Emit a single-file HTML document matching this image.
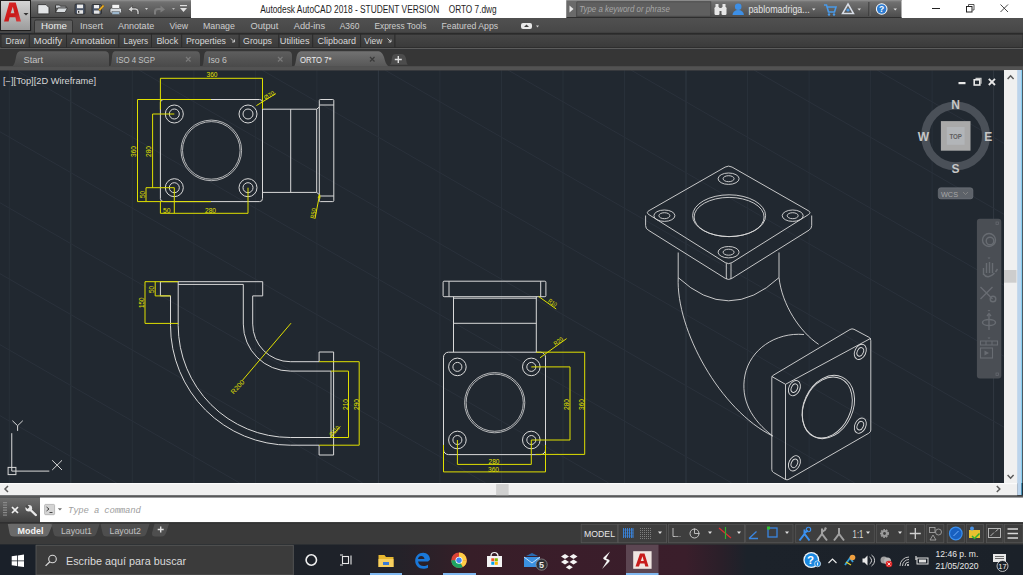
<!DOCTYPE html>
<html><head><meta charset="utf-8">
<style>
html,body{margin:0;padding:0;overflow:hidden;background:#212830;width:1023px;height:575px}
svg{display:block}
text{font-family:"Liberation Sans",sans-serif}
</style></head><body>
<svg width="1023" height="575" viewBox="0 0 1023 575">
<defs>
<linearGradient id="gQat" x1="0" y1="0" x2="0" y2="1"><stop offset="0" stop-color="#858585"/><stop offset="0.15" stop-color="#6e6e6e"/><stop offset="0.6" stop-color="#5c5c5c"/><stop offset="1" stop-color="#4a4a4a"/></linearGradient>
<linearGradient id="gTabRow" x1="0" y1="0" x2="0" y2="1"><stop offset="0" stop-color="#505050"/><stop offset="1" stop-color="#474747"/></linearGradient>
<linearGradient id="gApp" x1="0" y1="0" x2="0" y2="1"><stop offset="0" stop-color="#d4d4d4"/><stop offset="1" stop-color="#9c9c9c"/></linearGradient>
<linearGradient id="gTab" x1="0" y1="0" x2="0" y2="1"><stop offset="0" stop-color="#5e5e5e"/><stop offset="1" stop-color="#4a4a4a"/></linearGradient>
<linearGradient id="gPanel" x1="0" y1="0" x2="0" y2="1"><stop offset="0" stop-color="#474747"/><stop offset="1" stop-color="#3a3a3a"/></linearGradient>
<linearGradient id="gCmdL" x1="0" y1="0" x2="0" y2="1"><stop offset="0" stop-color="#6e6e6e"/><stop offset="1" stop-color="#3e3e3e"/></linearGradient>
<linearGradient id="gA" x1="0" y1="0" x2="1" y2="1"><stop offset="0" stop-color="#e02828"/><stop offset="0.6" stop-color="#c81818"/><stop offset="1" stop-color="#d84040"/></linearGradient>
<linearGradient id="gTask" gradientUnits="userSpaceOnUse" x1="0" y1="0" x2="1023" y2="0"><stop offset="0" stop-color="#1c2229"/><stop offset="0.33" stop-color="#1e2229"/><stop offset="0.39" stop-color="#242229"/><stop offset="0.43" stop-color="#2e2028"/><stop offset="0.46" stop-color="#371e28"/><stop offset="0.55" stop-color="#3a1d2a"/><stop offset="0.67" stop-color="#3a1e2b"/><stop offset="0.705" stop-color="#2a1f29"/><stop offset="0.73" stop-color="#1c222a"/><stop offset="1" stop-color="#1b2129"/></linearGradient>
<linearGradient id="gTabAct" x1="0" y1="0" x2="0" y2="1"><stop offset="0" stop-color="#727272"/><stop offset="1" stop-color="#575757"/></linearGradient>
</defs>
<!-- ===== DRAWING AREA ===== -->
<rect x="0" y="70" width="1004" height="413" fill="#212830"/>
<g>
<line x1="9.3" y1="70" x2="9.3" y2="483" stroke="#283039" stroke-width="1"/>
<line x1="70.8" y1="70" x2="70.8" y2="483" stroke="#313942" stroke-width="1"/>
<line x1="132.3" y1="70" x2="132.3" y2="483" stroke="#283039" stroke-width="1"/>
<line x1="193.9" y1="70" x2="193.9" y2="483" stroke="#283039" stroke-width="1"/>
<line x1="255.4" y1="70" x2="255.4" y2="483" stroke="#283039" stroke-width="1"/>
<line x1="316.9" y1="70" x2="316.9" y2="483" stroke="#283039" stroke-width="1"/>
<line x1="378.4" y1="70" x2="378.4" y2="483" stroke="#313942" stroke-width="1"/>
<line x1="439.9" y1="70" x2="439.9" y2="483" stroke="#283039" stroke-width="1"/>
<line x1="501.5" y1="70" x2="501.5" y2="483" stroke="#283039" stroke-width="1"/>
<line x1="563.0" y1="70" x2="563.0" y2="483" stroke="#283039" stroke-width="1"/>
<line x1="624.5" y1="70" x2="624.5" y2="483" stroke="#283039" stroke-width="1"/>
<line x1="686.0" y1="70" x2="686.0" y2="483" stroke="#313942" stroke-width="1"/>
<line x1="747.5" y1="70" x2="747.5" y2="483" stroke="#283039" stroke-width="1"/>
<line x1="809.1" y1="70" x2="809.1" y2="483" stroke="#283039" stroke-width="1"/>
<line x1="870.6" y1="70" x2="870.6" y2="483" stroke="#283039" stroke-width="1"/>
<line x1="932.1" y1="70" x2="932.1" y2="483" stroke="#283039" stroke-width="1"/>
<line x1="993.6" y1="70" x2="993.6" y2="483" stroke="#313942" stroke-width="1"/>
<line x1="-1214.1" y1="70" x2="-498.3" y2="483" stroke="#2a313b" stroke-width="1"/>
<line x1="-1091.1" y1="70" x2="-375.3" y2="483" stroke="#2a313b" stroke-width="1"/>
<line x1="-968.1" y1="70" x2="-252.3" y2="483" stroke="#2a313b" stroke-width="1"/>
<line x1="-845.1" y1="70" x2="-129.3" y2="483" stroke="#2a313b" stroke-width="1"/>
<line x1="-722.1" y1="70" x2="-6.3" y2="483" stroke="#2a313b" stroke-width="1"/>
<line x1="-599.1" y1="70" x2="116.7" y2="483" stroke="#2a313b" stroke-width="1"/>
<line x1="-476.1" y1="70" x2="239.7" y2="483" stroke="#2a313b" stroke-width="1"/>
<line x1="-353.1" y1="70" x2="362.7" y2="483" stroke="#2a313b" stroke-width="1"/>
<line x1="-230.1" y1="70" x2="485.7" y2="483" stroke="#2a313b" stroke-width="1"/>
<line x1="-107.1" y1="70" x2="608.7" y2="483" stroke="#2a313b" stroke-width="1"/>
<line x1="15.9" y1="70" x2="731.7" y2="483" stroke="#2a313b" stroke-width="1"/>
<line x1="138.9" y1="70" x2="854.7" y2="483" stroke="#2a313b" stroke-width="1"/>
<line x1="261.9" y1="70" x2="977.7" y2="483" stroke="#2a313b" stroke-width="1"/>
<line x1="384.9" y1="70" x2="1100.7" y2="483" stroke="#2a313b" stroke-width="1"/>
<line x1="507.9" y1="70" x2="1223.7" y2="483" stroke="#2a313b" stroke-width="1"/>
<line x1="630.9" y1="70" x2="1346.7" y2="483" stroke="#2a313b" stroke-width="1"/>
<line x1="753.9" y1="70" x2="1469.7" y2="483" stroke="#2a313b" stroke-width="1"/>
<line x1="876.9" y1="70" x2="1592.7" y2="483" stroke="#2a313b" stroke-width="1"/>
</g>
<text x="3" y="83.5" font-size="8.5" fill="#d8d8d8" textLength="93" lengthAdjust="spacingAndGlyphs">[−][Top][2D Wireframe]</text>
<!-- UCS icon -->
<g stroke="#d8d8d8" stroke-width="1" fill="none">
<path d="M11.75 433.2 V471.1 H49.3"/>
<rect x="8.1" y="467.4" width="7.8" height="7.2"/>
<path d="M12.4 420.7 L17.6 425.7 L22.8 420.7 M17.6 425.7 V430.9"/>
<path d="M52.2 460.3 L62 470 M62 460.3 L52.2 470"/>
</g>

<!-- ===== VIEW 1: top view ===== -->
<g stroke="#d9d9d9" stroke-width="1" fill="none">
<rect x="160.4" y="99.5" width="102.1" height="102.1" rx="3"/>
<circle cx="211.3" cy="150.4" r="30.3" stroke-width="0.8"/><circle cx="211.3" cy="150.4" r="28.8" stroke-width="0.8"/>
<circle cx="174.3" cy="114" r="9"/><circle cx="174.3" cy="114" r="5"/>
<circle cx="248" cy="114" r="9"/><circle cx="248" cy="114" r="5"/>
<circle cx="174.3" cy="187.7" r="9"/><circle cx="174.3" cy="187.7" r="5"/>
<circle cx="248" cy="187.7" r="9"/><circle cx="248" cy="187.7" r="5"/>
<path d="M262.5 109.2 H316.7 V192.4 H262.5"/>
<path d="M290.7 109.2 V192.4"/>
<path d="M316.7 109.2 L319.3 107 M316.7 192.4 L319.3 194.6"/>
<rect x="319.3" y="99.5" width="14.5" height="102.1" rx="1"/>
<path d="M319.3 105 H333.8 M319.3 196 H333.8"/>
</g>
<g stroke="#e0e000" stroke-width="1" fill="none">
<path d="M160.4 78.3 H262.5 M160.4 78.3 V109.5 M262.5 78.3 V109"/>
<path d="M137.5 99.5 V201.6 M137.5 99.5 H211 M137.5 201.6 H211"/>
<path d="M152.6 114 V187.7 M152.6 114 H174.3 M146 187.7 H174.3"/>
<path d="M146 187.7 V201.6"/>
<path d="M160.4 213.3 H248 M160.4 201.6 V213.3 M174.3 187.7 V213.3 M248 187.7 V213.3"/>
<path d="M256.4 105.6 L275.9 93.6"/>
<path d="M319.6 194.6 L315 218.6 M319.6 194.6 l-1.5 3.5 M319.6 194.6 l0.4 3.8"/>
</g>
<g fill="#e0e000" font-size="6.3">
<text x="206.5" y="77.3" textLength="11" lengthAdjust="spacingAndGlyphs">360</text>
<text x="0" y="0" transform="translate(136 157) rotate(-90)" textLength="11" lengthAdjust="spacingAndGlyphs">360</text>
<text x="0" y="0" transform="translate(151.3 157) rotate(-90)" textLength="11" lengthAdjust="spacingAndGlyphs">280</text>
<text x="0" y="0" transform="translate(145 198) rotate(-90)" textLength="7" lengthAdjust="spacingAndGlyphs">50</text>
<text x="163" y="213" textLength="7.5" lengthAdjust="spacingAndGlyphs">50</text>
<text x="205" y="213" textLength="11" lengthAdjust="spacingAndGlyphs">280</text>
<text x="0" y="0" transform="translate(265.5 100) rotate(-31)" textLength="11" lengthAdjust="spacingAndGlyphs">Ø70</text>
<text x="0" y="0" transform="translate(314.8 219) rotate(-80)" font-size="6.5" textLength="10.5" lengthAdjust="spacingAndGlyphs">R50</text>
</g>

<!-- ===== VIEW 2: front view elbow ===== -->
<g stroke="#d9d9d9" stroke-width="1" fill="none">
<path d="M170.5 295.9 H160.4 V281.7 H262.7 V295.9 H252.7 V324.1"/>
<path d="M178.2 284.4 H243.3 V324.1"/>
<path d="M170.5 295.9 V325.4 A119.8 119.8 0 0 0 290.3 445.2 H319.1"/>
<path d="M178.2 281.7 V325.4 A112.1 112.1 0 0 0 290.3 437.5 H331"/>
<path d="M252.7 324.1 A37.6 37.6 0 0 0 290.3 361.7 H319.1"/>
<path d="M243.3 324.1 A47 47 0 0 0 290.3 371.1 H331"/>
<path d="M319.1 361.7 V352 H333.6 V455 H319.1 V445.2"/>
<path d="M331 371.1 V437.5"/>
</g>
<g stroke="#e0e000" stroke-width="1" fill="none">
<path d="M145 281.7 H178.2 M145 281.7 V323.4 H178.2"/>
<path d="M155.2 281.7 V295.9 H170.5"/>
<path d="M242.3 380.5 L291 323.2"/>
<path d="M319.1 361.7 H359.2 V445.2 H319.1"/>
<path d="M331 371.1 H348.5 V437.5 H331"/>
<path d="M330.3 437.4 L340.3 426.4"/>
</g>
<g fill="#e0e000" font-size="6.3">
<text x="0" y="0" transform="translate(154 293) rotate(-90)" textLength="7" lengthAdjust="spacingAndGlyphs">50</text>
<text x="0" y="0" transform="translate(144 308) rotate(-90)" textLength="10.5" lengthAdjust="spacingAndGlyphs">150</text>
<text x="0" y="0" transform="translate(233.5 394.5) rotate(-47)" font-size="6.5" textLength="16.5" lengthAdjust="spacingAndGlyphs">R200</text>
<text x="0" y="0" transform="translate(347.5 410) rotate(-90)" textLength="11" lengthAdjust="spacingAndGlyphs">210</text>
<text x="0" y="0" transform="translate(358.5 410) rotate(-90)" textLength="11" lengthAdjust="spacingAndGlyphs">290</text>
<text x="0" y="0" transform="translate(332 437) rotate(-48)" textLength="12" lengthAdjust="spacingAndGlyphs">Ø110</text>
</g>

<!-- ===== VIEW 3: side view ===== -->
<g stroke="#d9d9d9" stroke-width="1" fill="none">
<rect x="443.1" y="281.2" width="102.8" height="15.5" rx="1"/>
<path d="M449 281.2 V296.7 M540.7 281.2 V296.7"/>
<path d="M453.5 296.7 V352.2 M536.3 296.7 V352.2 M453.5 298.2 H536.3 M453.5 323.3 H536.3"/>
<rect x="443.5" y="352.2" width="102" height="102.4" rx="5"/>
<circle cx="494.7" cy="402.7" r="30.1" stroke-width="0.8"/><circle cx="494.7" cy="402.7" r="28.6" stroke-width="0.8"/>
<circle cx="457.4" cy="366.9" r="8.8"/><circle cx="457.4" cy="366.9" r="4.5"/>
<circle cx="531.3" cy="366.9" r="8.8"/><circle cx="531.3" cy="366.9" r="4.5"/>
<circle cx="457.4" cy="440" r="8.8"/><circle cx="457.4" cy="440" r="4.5"/>
<circle cx="531.3" cy="440" r="8.8"/><circle cx="531.3" cy="440" r="4.5"/>
</g>
<g stroke="#e0e000" stroke-width="1" fill="none">
<path d="M531.3 366.9 H570 V440 H531.3"/>
<path d="M536.3 352.2 H584.7 V454.4 H535.5"/>
<path d="M457.4 440 V464.4 H531.3 V440"/>
<path d="M443.5 444.9 V471.9 H545.5 V444.9"/>
<path d="M538.5 296.4 L556.2 309"/>
<path d="M540 357.8 L566.6 338.6"/>
</g>
<g fill="#e0e000" font-size="6.3">
<text x="0" y="0" transform="translate(569 410) rotate(-90)" textLength="11" lengthAdjust="spacingAndGlyphs">280</text>
<text x="0" y="0" transform="translate(583.5 410) rotate(-90)" textLength="11" lengthAdjust="spacingAndGlyphs">360</text>
<text x="488.5" y="464" textLength="11" lengthAdjust="spacingAndGlyphs">280</text>
<text x="488" y="471.5" textLength="11" lengthAdjust="spacingAndGlyphs">360</text>
<text x="0" y="0" transform="translate(547.5 302) rotate(35)" textLength="9" lengthAdjust="spacingAndGlyphs">R10</text>
<text x="0" y="0" transform="translate(555.5 346) rotate(-35)" textLength="10" lengthAdjust="spacingAndGlyphs">R20</text>
</g>

<!-- ===== VIEW 4: isometric ===== -->
<g stroke="#d9d9d9" stroke-width="0.9" fill="none">
<path d="M732.1 167.1 L808.2 210.6 Q811.7 212.6 808.3 214.7 L732.0 262.6 Q728.6 264.7 725.2 262.6 L649.0 214.7 Q645.6 212.6 649.1 210.6 L725.1 167.1 Q728.6 165.1 732.1 167.1Z"/>
<path d="M645.6 215.5 V225.5 Q645.6 228.5 648.2 230.1 L725.5 278.5 Q728.6 280.4 731.7 278.5 L809.1 230.1 Q811.7 228.5 811.7 225.5 V215.5"/>
<path d="M726.3 263.3 V279 M731 263.3 V279"/>
<ellipse cx="729.1" cy="215.7" rx="36.5" ry="20.9"/>
<ellipse cx="729.1" cy="217" rx="35" ry="19.6"/>
<ellipse cx="728.6" cy="178.7" rx="10.5" ry="5.7"/><ellipse cx="728.6" cy="178.7" rx="5.5" ry="3"/>
<ellipse cx="664.4" cy="215.7" rx="10.5" ry="5.7"/><ellipse cx="664.4" cy="215.7" rx="5.5" ry="3"/>
<ellipse cx="792.7" cy="215.7" rx="10.5" ry="5.7"/><ellipse cx="792.7" cy="215.7" rx="5.5" ry="3"/>
<ellipse cx="728.6" cy="252.2" rx="10.5" ry="5.7"/><ellipse cx="728.6" cy="252.2" rx="5.5" ry="3"/>
<path d="M678.2 252.5 V277.6"/>
<path d="M779 252.5 V277.6"/>
<path d="M678.2 277.6 Q728.6 324 779 277.6"/>
<path d="M678.2 277.6 C676 330 720 410 772.7 436"/>
<path d="M779 277.6 C782 305 800 332 818.6 344.3"/>
<path d="M772.7 436 C752 420 740 400 745 375 C750 350 775 332 804 334.5"/>
<!-- side flange -->
<path d="M774 374.8 L850 329.5 Q852 328.3 854 329.3 L868.8 337.2 Q870.8 338.3 870.8 340.5 V430 Q870.8 432 868.8 433.2 L789 479.2 Q787 480.3 785.5 479.5 L773.5 472.5 Q771.8 471.5 771.8 469.5 V377.5 Q771.8 375.8 774 374.8Z"/>
<path d="M785.5 384.3 L870.8 338.3 M785.5 384.3 V479.5 M771.8 376.5 L785.5 384.3"/>
<ellipse cx="828.3" cy="407" rx="24.5" ry="33" transform="rotate(25 828.3 407)"/>
<ellipse cx="827.3" cy="407.5" rx="23.2" ry="31.8" transform="rotate(25 827.3 407.5)"/>
<ellipse cx="794.4" cy="388.2" rx="5.5" ry="8" transform="rotate(25 794.4 388.2)"/><ellipse cx="794.4" cy="388.2" rx="3" ry="4.5" transform="rotate(25 794.4 388.2)"/>
<ellipse cx="860.3" cy="351.9" rx="5.5" ry="8" transform="rotate(25 860.3 351.9)"/><ellipse cx="860.3" cy="351.9" rx="3" ry="4.5" transform="rotate(25 860.3 351.9)"/>
<ellipse cx="860.3" cy="425.7" rx="5.5" ry="8" transform="rotate(25 860.3 425.7)"/><ellipse cx="860.3" cy="425.7" rx="3" ry="4.5" transform="rotate(25 860.3 425.7)"/>
<ellipse cx="794.4" cy="463.3" rx="5.5" ry="8" transform="rotate(25 794.4 463.3)"/><ellipse cx="794.4" cy="463.3" rx="3" ry="4.5" transform="rotate(25 794.4 463.3)"/>
</g>

<!-- viewport controls -->
<rect x="958.5" y="82" width="7" height="2.2" fill="#e8e8e8"/>
<rect x="974.2" y="79.8" width="5.6" height="5.2" fill="none" stroke="#e8e8e8" stroke-width="1.6"/><path d="M975.5 78.3 h5.5 v5.5" fill="none" stroke="#c8c8c8" stroke-width="1.2"/>
<path d="M988.8 78.8 l6.2 6.2 M995 78.8 l-6.2 6.2" stroke="#e8e8e8" stroke-width="1.8"/>
<!-- ViewCube -->
<circle cx="955.6" cy="135.9" r="30.4" fill="none" stroke="#4a5058" stroke-width="8"/>
<rect x="940.9" y="121.1" width="29.6" height="29.6" fill="#a9a9a9"/>
<rect x="946.8" y="127" width="17.8" height="17.8" fill="#b2b5b8"/>
<text x="955.7" y="139.3" font-size="8" font-weight="bold" fill="#5e5e5e" text-anchor="middle" textLength="12.6" lengthAdjust="spacingAndGlyphs">TOP</text>
<g font-size="12" font-weight="bold" fill="#c6c6c6" text-anchor="middle">
<text x="955.5" y="109">N</text>
<text x="955.5" y="173.4">S</text>
<text x="923.3" y="140.9">W</text>
<text x="988.2" y="140.9">E</text>
</g>
<rect x="938.3" y="187.8" width="34.6" height="11.1" rx="2.5" fill="#5d6269" stroke="#70757c" stroke-width="0.6"/>
<text x="941" y="196.5" font-size="8" fill="#a8a8a8" textLength="17" lengthAdjust="spacingAndGlyphs">WCS</text>
<path d="M963 192 l2.5 2.5 l2.5-2.5" stroke="#8a8a8a" stroke-width="0.8" fill="none"/>
<!-- nav bar -->
<rect x="976.9" y="218.8" width="24.4" height="159.8" rx="3" fill="#4a4e54"/>
<rect x="996" y="222" width="2.5" height="2.5" fill="none" stroke="#686c72" stroke-width="0.7"/>
<rect x="996" y="373" width="2.5" height="2.5" fill="none" stroke="#686c72" stroke-width="0.7"/>
<g stroke="#686c72" stroke-width="1.4" fill="none">
<circle cx="989" cy="240" r="6.5"/><circle cx="990" cy="241" r="3.8"/>
<path d="M983.5 275 v-7 M986.5 273 v-10 M989.5 273 v-11 M992.5 273 v-10 M995.5 272 l2-3 M983.5 274 q4 6 11 -1"/>
<path d="M980.5 287 l12 12 M992.5 287 l-12 12"/><circle cx="993" cy="299" r="2.8"/>
<path d="M989 314 v16"/><ellipse cx="989" cy="322.5" rx="6.5" ry="3"/><path d="M987 316 l2-2.5 l2 2.5"/>
<path d="M980.5 341 h17 v4 h-17z M986 341 v4 M992 341 v4" stroke-width="1.1"/><rect x="980.5" y="348" width="12" height="10" stroke-width="1.1"/><path d="M984.5 350.5 l4.5 2.5 l-4.5 2.5z" fill="#686c72" stroke="none"/>
</g>
<path d="M987.5 257.5 h3 l-1.5 1.5z M987.5 310 h3 l-1.5 1.5z M987.5 337.5 h3 l-1.5 1.5z" fill="#686c72"/>
<!-- ===== TITLE / QAT ROW ===== -->
<rect x="0" y="0" width="1023" height="18" fill="#ffffff"/>
<rect x="0" y="0" width="191" height="18" fill="url(#gQat)"/>
<rect x="0" y="0" width="191" height="1" fill="#8a8a8a"/>
<rect x="0" y="17" width="191" height="1" fill="#2e2e2e"/>
<!-- QAT icons -->
<g>
 <path d="M37.8 4.6 h8.2 l3 3 v6.3 h-11.2z" fill="#e2e4e6" stroke="#333" stroke-width="0.9"/>
 <path d="M55.5 5 h4 l1 1.2 h5.5 v2 h-10.5z" fill="#c8ccd0" stroke="#333" stroke-width="0.8"/><path d="M55.5 12.5 l2.5-4.5 h9.5 l-2.5 4.5z" fill="#d8dcdf" stroke="#333" stroke-width="0.8"/><path d="M55.5 6 v6.5" stroke="#333" stroke-width="0.8"/>
 <rect x="75" y="4" width="10" height="10" rx="1" fill="#4c5668" stroke="#2a2a2a" stroke-width="0.8"/><rect x="77" y="4.6" width="6" height="3.6" fill="#ececec"/><rect x="77" y="10.2" width="6" height="3.5" fill="#e4e4e4"/><rect x="78" y="11" width="1.3" height="1.8" fill="#333"/>
 <rect x="92" y="4.5" width="9.5" height="9.5" rx="1" fill="#4c5668" stroke="#2a2a2a" stroke-width="0.8"/><rect x="94" y="10.5" width="5.5" height="3.2" fill="#e4e4e4"/><rect x="94" y="5" width="5" height="3.3" fill="#ececec"/><path d="M98.5 9.5 l4.5-4.8 l1.4 1.4 l-4.5 4.8z" fill="#f0b020" stroke="#6a4a10" stroke-width="0.4"/>
 <rect x="110" y="8" width="11.5" height="5.2" rx="1.5" fill="#d4d8dc" stroke="#333" stroke-width="0.7"/><rect x="112" y="4.5" width="7.5" height="3.8" fill="#f4f4f4" stroke="#555" stroke-width="0.5"/><rect x="112" y="11.5" width="7.5" height="3" fill="#9cb6cc" stroke="#555" stroke-width="0.5"/>
 <path d="M128 9.5 l4.5-4 v2.5 h3 a3.5 3.5 0 0 1 3.5 3.5 v3 h-2 v-2.5 a2 2 0 0 0 -2-2 h-2.5 v2.5z" fill="#d4d4d4" stroke="#333" stroke-width="0.6"/>
 <path d="M145 8 h3 l-1.5 2z" fill="#d0d0d0"/>
 <path d="M165 9.5 l-4.5-4 v2.5 h-3 a3.5 3.5 0 0 0 -3.5 3.5 v3 h2 v-2.5 a2 2 0 0 1 2-2 h2.5 v2.5z" fill="#7e7e7e"/>
 <path d="M172 8 h3 l-1.5 2z" fill="#b0b0b0"/>
 <rect x="180" y="5" width="7" height="1.2" fill="#e0e0e0"/><path d="M180 8 h7 l-3.5 4z" fill="#e0e0e0"/>
</g>
<!-- App button -->
<rect x="0" y="0" width="31" height="31" fill="#1e1e1e"/>
<rect x="1" y="1" width="29" height="29" fill="url(#gApp)"/>
<path d="M4 21.6 L9.3 2.4 H15.7 L21 21.6 H16.4 L15.4 17.3 H9.6 L8.6 21.6Z M10.6 13.2 H14.4 L12.8 6.8Z" fill="url(#gA)" fill-rule="evenodd"/>
<path d="M23.5 13 h5 l-2.5 2.6z" fill="#333"/>
<!-- Title text -->
<text x="260.2" y="12.6" font-size="10" fill="#1e1e1e" textLength="179" lengthAdjust="spacingAndGlyphs">Autodesk AutoCAD 2018 - STUDENT VERSION</text>
<text x="448.7" y="12.6" font-size="10" fill="#1e1e1e" textLength="48" lengthAdjust="spacingAndGlyphs">ORTO 7.dwg</text>
<!-- Search/InfoCenter bar -->
<rect x="566.5" y="0" width="335" height="18" fill="url(#gQat)"/>
<rect x="566.5" y="0" width="335" height="1" fill="#8a8a8a"/>
<rect x="566.5" y="17" width="335" height="1" fill="#2e2e2e"/>
<rect x="566.5" y="1" width="9.5" height="16" fill="#6a6a6a"/>
<path d="M569.5 5.5 l4 3.5 l-4 3.5z" fill="#e8e8e8"/>
<rect x="576.8" y="1.8" width="134" height="14.4" fill="#5f5f5f" stroke="#474747" stroke-width="0.8"/>
<text x="579.3" y="12.4" font-size="9.5" font-style="italic" fill="#a6a6a6" textLength="90.5" lengthAdjust="spacingAndGlyphs">Type a keyword or phrase</text>
<!-- binoculars -->
<g fill="#e6e6e6"><rect x="714.5" y="7" width="5" height="8" rx="1.2"/><rect x="721.5" y="7" width="5" height="8" rx="1.2"/><rect x="715.5" y="4" width="3" height="4"/><rect x="722.5" y="4" width="3" height="4"/><rect x="719" y="8" width="3" height="3"/></g>
<!-- user -->
<circle cx="738.2" cy="6.8" r="3.3" fill="#3d8fe6"/><path d="M732.5 15 a5.7 5 0 0 1 11.4 0z" fill="#3d8fe6"/>
<text x="748.4" y="12.8" font-size="10" fill="#e2e2e2" textLength="61.3" lengthAdjust="spacingAndGlyphs">pablomadriga...</text>
<path d="M812 8.5 h3.5 l-1.75 2z" fill="#e0e0e0"/>
<!-- cart -->
<path d="M824 5 h2.5 l2 7 h6 l1.5-5 h-8.5" fill="none" stroke="#4a9ae8" stroke-width="1.6"/><circle cx="829" cy="14.5" r="1.2" fill="#4a9ae8"/><circle cx="834" cy="14.5" r="1.2" fill="#4a9ae8"/>
<!-- a360 -->
<path d="M848 4 l5.5 9.5 h-11z" fill="none" stroke="#d8dde6" stroke-width="1.5"/><circle cx="848" cy="10" r="1.6" fill="#4a9ae8"/>
<path d="M857.5 8.5 h3.5 l-1.75 2z" fill="#e0e0e0"/>
<rect x="868.5" y="2" width="1" height="14" fill="#2e2e2e"/><rect x="869.5" y="2" width="1" height="14" fill="#6a6a6a"/>
<circle cx="881.7" cy="9" r="5.8" fill="#ffffff"/><circle cx="881.7" cy="9" r="4.8" fill="#2d7bd0"/>
<text x="881.7" y="12.3" font-size="8.5" font-weight="bold" fill="#fff" text-anchor="middle">?</text>
<path d="M893.5 8.5 h3.5 l-1.75 2z" fill="#e0e0e0"/>
<!-- window controls -->
<rect x="932" y="8" width="8" height="1" fill="#222"/>
<rect x="966.5" y="6.5" width="5.5" height="5.5" fill="none" stroke="#222" stroke-width="1"/><path d="M968.5 6 v-1.5 h5.5 v5.5 h-1.5" fill="none" stroke="#444" stroke-width="0.9"/>
<path d="M1000.5 4.5 l7.5 7.5 M1008 4.5 l-7.5 7.5" stroke="#333" stroke-width="0.9"/>

<!-- ===== RIBBON TABS ROW ===== -->
<rect x="31.2" y="18" width="991.8" height="15" fill="url(#gTabRow)"/>
<rect x="0" y="31" width="1023" height="2" fill="#474747"/>
<rect x="31.2" y="32.8" width="991.8" height="1.2" fill="#2c2c2c"/>
<path d="M34.5 33 V21.5 a1.5 1.5 0 0 1 1.5-1.5 H71 a1.5 1.5 0 0 1 1.5 1.5 V33z" fill="#5e5e5e" stroke="#2c2c2c" stroke-width="0.8"/>
<g font-size="9.5" fill="#cdcdcd">
<text x="41" y="29" fill="#ececec" textLength="26" lengthAdjust="spacingAndGlyphs">Home</text>
<text x="80" y="29" textLength="23" lengthAdjust="spacingAndGlyphs">Insert</text>
<text x="118" y="29" textLength="36.2" lengthAdjust="spacingAndGlyphs">Annotate</text>
<text x="169.4" y="29" textLength="18.6" lengthAdjust="spacingAndGlyphs">View</text>
<text x="203" y="29" textLength="31.9" lengthAdjust="spacingAndGlyphs">Manage</text>
<text x="250.5" y="29" textLength="27.8" lengthAdjust="spacingAndGlyphs">Output</text>
<text x="293.7" y="29" textLength="31.5" lengthAdjust="spacingAndGlyphs">Add-ins</text>
<text x="339.7" y="29" textLength="19.7" lengthAdjust="spacingAndGlyphs">A360</text>
<text x="374.4" y="29" textLength="52" lengthAdjust="spacingAndGlyphs">Express Tools</text>
<text x="441.5" y="29" textLength="56.6" lengthAdjust="spacingAndGlyphs">Featured Apps</text>
</g>
<rect x="521" y="23" width="11" height="6" rx="2" fill="#e8e8e8"/><path d="M524 27 l2.5-2.5 l2.5 2.5z" fill="#3e3e3e"/>
<path d="M536 25.5 h3 l-1.5 2z" fill="#d0d0d0"/>

<!-- ===== PANEL ROW ===== -->
<rect x="0" y="34" width="1023" height="14" fill="#363636"/>
<rect x="0" y="47.6" width="1023" height="1.7" fill="#5c5c5c"/>
<g fill="url(#gPanel)" stroke="#2a2a2a" stroke-width="0.8">
<rect x="1" y="34.2" width="28.3" height="13.2"/>
<rect x="29.3" y="34.2" width="37.2" height="13.2"/>
<rect x="66.5" y="34.2" width="52.4" height="13.2"/>
<rect x="118.9" y="34.2" width="32.6" height="13.2"/>
<rect x="151.5" y="34.2" width="30.3" height="13.2"/>
<rect x="181.8" y="34.2" width="57.4" height="13.2"/>
<rect x="239.2" y="34.2" width="39.7" height="13.2"/>
<rect x="278.9" y="34.2" width="33.9" height="13.2"/>
<rect x="312.8" y="34.2" width="47.9" height="13.2"/>
<rect x="360.7" y="34.2" width="34.3" height="13.2"/>
<rect x="395" y="34.2" width="628" height="13.2"/>
</g>
<g font-size="9.5" fill="#d8d8d8">
<text x="5.5" y="44" textLength="19.9" lengthAdjust="spacingAndGlyphs">Draw</text>
<text x="33.6" y="44" textLength="28.6" lengthAdjust="spacingAndGlyphs">Modify</text>
<text x="70.4" y="44" textLength="44.9" lengthAdjust="spacingAndGlyphs">Annotation</text>
<text x="123.6" y="44" textLength="24.6" lengthAdjust="spacingAndGlyphs">Layers</text>
<text x="156.4" y="44" textLength="21.9" lengthAdjust="spacingAndGlyphs">Block</text>
<text x="186" y="44" textLength="40" lengthAdjust="spacingAndGlyphs">Properties</text>
<text x="243" y="44" textLength="29" lengthAdjust="spacingAndGlyphs">Groups</text>
<text x="279.8" y="44" textLength="29.8" lengthAdjust="spacingAndGlyphs">Utilities</text>
<text x="317.5" y="44" textLength="38.5" lengthAdjust="spacingAndGlyphs">Clipboard</text>
<text x="364.3" y="44" textLength="18" lengthAdjust="spacingAndGlyphs">View</text>
</g>
<path d="M231 38.5 l3.5 3.5 M234.5 39.5 v2.5 h-2.5" stroke="#d0d0d0" stroke-width="0.9" fill="none"/>
<path d="M387.5 38.5 l3.5 3.5 M391 39.5 v2.5 h-2.5" stroke="#d0d0d0" stroke-width="0.9" fill="none"/>

<!-- ===== FILE TABS ROW ===== -->
<rect x="0" y="49.3" width="1023" height="21" fill="#363636"/>
<rect x="0" y="66.2" width="1023" height="4.2" fill="#525252"/>
<g fill="url(#gTab)">
<path d="M9 66.5 C14 67.5 15 63 16 57 C17 52.5 18 51.2 21 51.2 H104 C108 51.2 109 53 109 56 V66.5z"/>
<path d="M109 66.5 C111 67.5 111.5 63 112 57 C112.5 52.5 113 51.2 116 51.2 H196 C199 51.2 200 53 200 56 V66.5z"/>
<path d="M201 66.5 C203 67.5 203.5 63 204 57 C204.5 52.5 205 51.2 208 51.2 H288 C291 51.2 292 53 292 56 V66.5z"/>
<path d="M292.5 66.5 C295 67.5 295.5 63 296.5 57 C297.5 52.5 299 51.2 302 51.2 H377 C381 51.2 382.5 53 384 57 C385.5 63 387 67.5 392 66.5z" fill="url(#gTabAct)"/>
<path d="M389.5 64.8 C391.5 64.8 391.5 60 392 57.5 C392.5 55 393.5 54 396 54 H401 C404 54 405.5 56 406 58.5 C406.5 62 407 64.8 408 64.8z" fill="#4c4c4c"/>
</g>
<g font-size="9.5" fill="#c2c2c2">
<text x="23.5" y="63" textLength="19.5" lengthAdjust="spacingAndGlyphs">Start</text>
<text x="116" y="63" textLength="39" lengthAdjust="spacingAndGlyphs">ISO 4 SGP</text>
<text x="208" y="63" textLength="19" lengthAdjust="spacingAndGlyphs">Iso 6</text>
<text x="300" y="63" fill="#ececec" textLength="31.5" lengthAdjust="spacingAndGlyphs">ORTO 7*</text>
</g>
<g stroke="#7a7a7a" stroke-width="1.2">
<path d="M186 57 l4.5 4.5 M190.5 57 l-4.5 4.5"/>
<path d="M278 57 l4.5 4.5 M282.5 57 l-4.5 4.5"/>
<path d="M370 57 l4.5 4.5 M374.5 57 l-4.5 4.5" stroke="#3a3a3a"/>
</g>
<path d="M398.3 56 v7 M394.8 59.5 h7" stroke="#e0e0e0" stroke-width="1.4"/>
<!-- ===== V SCROLLBAR ===== -->
<rect x="1004" y="70" width="19" height="413" fill="#f0f0f0"/>
<rect x="1017.2" y="70" width="3.8" height="425" fill="#bcd4ec"/>
<rect x="1021.3" y="70" width="1" height="425" fill="#5ac0f0"/>
<rect x="1022.3" y="70" width="0.7" height="425" fill="#1a2028"/>
<rect x="1004" y="270" width="12.5" height="12.7" fill="#cdcdcd"/>
<path d="M1007.6 79 l3-3.2 l3 3.2" stroke="#5a5a5a" stroke-width="1.5" fill="none"/>
<path d="M1007.6 475 l3 3.2 l3-3.2" stroke="#5a5a5a" stroke-width="1.5" fill="none"/>
<!-- ===== H SCROLLBAR ===== -->
<rect x="0" y="483" width="1017.2" height="12.5" fill="#f0f0f0"/>
<rect x="0" y="483" width="1017.2" height="1.2" fill="#fbfbfb"/>
<rect x="496.1" y="484.1" width="12.5" height="11.4" fill="#d0d0d0"/>
<path d="M8 486 l-3 3 l3 3" stroke="#5a5a5a" stroke-width="1.5" fill="none"/>
<path d="M996.8 486 l3 3 l-3 3" stroke="#5a5a5a" stroke-width="1.5" fill="none"/>
<!-- ===== COMMAND LINE ===== -->
<rect x="0" y="495.5" width="1023" height="2" fill="#585858"/>
<rect x="0" y="497.5" width="40" height="25" fill="url(#gCmdL)"/>
<rect x="40" y="497.5" width="983" height="25" fill="#ffffff"/>
<g fill="#8a8a8a"><rect x="3" y="502" width="4" height="1.2"/><rect x="3" y="504.5" width="4" height="1.2"/><rect x="3" y="507" width="4" height="1.2"/><rect x="3" y="509.5" width="4" height="1.2"/><rect x="3" y="512" width="4" height="1.2"/><rect x="3" y="514.5" width="4" height="1.2"/></g>
<path d="M12 507 l6 6 M18 507 l-6 6" stroke="#f0f0f0" stroke-width="1.7"/>
<path d="M29.5 509 L35.8 515" stroke="#e8e8e8" stroke-width="2.4" stroke-linecap="round"/>
<circle cx="28.8" cy="508.2" r="3.3" fill="#e8e8e8"/><path d="M25 506.5 L27.5 509 L29.5 507 L27 504.5z" fill="#4a4a4a"/>
<rect x="44.6" y="504.4" width="10" height="10.3" rx="1" fill="#d4d4d4" stroke="#9a9a9a" stroke-width="0.6"/>
<path d="M46.5 507 l2.5 2 l-2.5 2 M49.5 512.5 h3" stroke="#333" stroke-width="0.9" fill="none"/>
<path d="M57.8 508.2 h4.2 l-2.1 2.4z" fill="#707070"/>
<text x="68" y="513" font-size="9" font-style="italic" fill="#a0a0a0" textLength="72.8" lengthAdjust="spacing" style="font-family:'Liberation Mono',monospace">Type a command</text>

<!-- ===== LAYOUT TABS / STATUS BAR ===== -->
<rect x="0" y="522.4" width="1023" height="22.3" fill="#3a3a3a"/>
<rect x="0" y="522.4" width="1023" height="1" fill="#2c2c2c"/>
<path d="M11.5 523.8 H52.8 L49 533 C48 535.5 47 536.5 44 536.5 H14 C11 536.5 10 535.5 9.5 533 L7.8 524z" fill="#6a6a6a"/>
<path d="M54 523.8 H99.7 L96.5 533 C95.5 535.5 94.5 536.5 91.5 536.5 H58 C55 536.5 54 535.5 53.5 533 L51.5 524z" fill="#4e4e4e"/>
<path d="M103 523.8 H149.6 L146.5 533 C145.5 535.5 144.5 536.5 141.5 536.5 H107 C104 536.5 103 535.5 102.5 533 L100.5 524z" fill="#4e4e4e"/>
<path d="M154.5 523.8 H169.1 L166 533 C165 535.5 164 536.5 161 536.5 H155 C152.5 536.5 152 535.5 152 533z" fill="#4e4e4e"/>
<text x="17.6" y="534" font-size="9.5" font-weight="bold" fill="#f4f4f4" textLength="25.8" lengthAdjust="spacingAndGlyphs">Model</text>
<text x="61" y="534" font-size="9.5" fill="#c0c0c0" textLength="30.9" lengthAdjust="spacingAndGlyphs">Layout1</text>
<text x="109.5" y="534" font-size="9.5" fill="#c0c0c0" textLength="31.3" lengthAdjust="spacingAndGlyphs">Layout2</text>
<path d="M160.7 526.5 v6 M157.7 529.5 h6" stroke="#e0e0e0" stroke-width="1.4"/>
<!-- status buttons -->
<g fill="#3e3e3e" stroke="#555555" stroke-width="0.8">
<rect x="581.2" y="524.3" width="36.4" height="18.4"/>
<rect x="618.2" y="524.3" width="48.4" height="18.4"/>
<rect x="668.4" y="524.3" width="76.2" height="18.4"/>
<rect x="745.7" y="524.3" width="47.3" height="18.4"/>
<rect x="795.7" y="524.3" width="78.6" height="18.4"/>
<rect x="876.6" y="524.3" width="28.4" height="18.4"/>
<rect x="906.2" y="524.3" width="18.2" height="18.4"/>
<rect x="926.7" y="524.3" width="17.1" height="18.4"/>
<rect x="947.2" y="524.3" width="17.1" height="18.4"/>
<rect x="966.5" y="524.3" width="17.1" height="18.4"/>
<rect x="986.4" y="524.3" width="16.6" height="18.4"/>
<rect x="1004.6" y="524.3" width="18.4" height="18.4"/>
</g>
<text x="584" y="537.3" font-size="9.5" fill="#e8e8e8" textLength="31" lengthAdjust="spacingAndGlyphs">MODEL</text>
<!-- grid icon -->
<g stroke="#3a86e0" stroke-width="0.9"><path d="M623.5 528 v10 M625.5 528 v10 M627.5 528 v10 M629.5 528 v10 M631.5 528 v10 M633 528 v10"/><path d="M623 530 h10.5 M623 533 h10.5 M623 536 h10.5" stroke-width="0.6"/></g>
<g fill="#8e8e8e"><rect x="640.0" y="528.0" width="0.9" height="0.9"/><rect x="640.0" y="530.0" width="0.9" height="0.9"/><rect x="640.0" y="532.0" width="0.9" height="0.9"/><rect x="640.0" y="534.0" width="0.9" height="0.9"/><rect x="640.0" y="536.0" width="0.9" height="0.9"/><rect x="640.0" y="538.0" width="0.9" height="0.9"/><rect x="642.0" y="528.0" width="0.9" height="0.9"/><rect x="642.0" y="530.0" width="0.9" height="0.9"/><rect x="642.0" y="532.0" width="0.9" height="0.9"/><rect x="642.0" y="534.0" width="0.9" height="0.9"/><rect x="642.0" y="536.0" width="0.9" height="0.9"/><rect x="642.0" y="538.0" width="0.9" height="0.9"/><rect x="644.0" y="528.0" width="0.9" height="0.9"/><rect x="644.0" y="530.0" width="0.9" height="0.9"/><rect x="644.0" y="532.0" width="0.9" height="0.9"/><rect x="644.0" y="534.0" width="0.9" height="0.9"/><rect x="644.0" y="536.0" width="0.9" height="0.9"/><rect x="644.0" y="538.0" width="0.9" height="0.9"/><rect x="646.0" y="528.0" width="0.9" height="0.9"/><rect x="646.0" y="530.0" width="0.9" height="0.9"/><rect x="646.0" y="532.0" width="0.9" height="0.9"/><rect x="646.0" y="534.0" width="0.9" height="0.9"/><rect x="646.0" y="536.0" width="0.9" height="0.9"/><rect x="646.0" y="538.0" width="0.9" height="0.9"/><rect x="648.0" y="528.0" width="0.9" height="0.9"/><rect x="648.0" y="530.0" width="0.9" height="0.9"/><rect x="648.0" y="532.0" width="0.9" height="0.9"/><rect x="648.0" y="534.0" width="0.9" height="0.9"/><rect x="648.0" y="536.0" width="0.9" height="0.9"/><rect x="648.0" y="538.0" width="0.9" height="0.9"/><rect x="650.0" y="528.0" width="0.9" height="0.9"/><rect x="650.0" y="530.0" width="0.9" height="0.9"/><rect x="650.0" y="532.0" width="0.9" height="0.9"/><rect x="650.0" y="534.0" width="0.9" height="0.9"/><rect x="650.0" y="536.0" width="0.9" height="0.9"/><rect x="650.0" y="538.0" width="0.9" height="0.9"/></g>
<path d="M658 531.5 h4 l-2 2.5z" fill="#e0e0e0"/>
<!-- ortho etc -->
<path d="M673 528 v8.5 h5" stroke="#c8c8c8" stroke-width="0.9" fill="none"/><path d="M675 536.5 h6" stroke="#8a8a8a" stroke-width="0.6"/>
<circle cx="694.5" cy="533.5" r="4.5" fill="none" stroke="#c8c8c8" stroke-width="1"/><path d="M694.5 533.5 h5 M694.5 533.5 v-5" stroke="#c8c8c8" stroke-width="0.9"/>
<path d="M708 531.5 h4 l-2 2.5z" fill="#e0e0e0"/>
<path d="M719 528 l12 10" stroke="#e03030" stroke-width="1.2"/><path d="M725.5 527 v12" stroke="#30b030" stroke-width="1.2"/>
<path d="M737 531.5 h4 l-2 2.5z" fill="#e0e0e0"/>
<path d="M749 538.5 h9 M749 538.5 l7.5-7" stroke="#3a86e0" stroke-width="1.3" fill="none"/>
<rect x="768" y="528" width="9" height="9" fill="none" stroke="#3a86e0" stroke-width="1.3"/><rect x="767" y="526.5" width="3" height="3" fill="#30c030"/>
<path d="M785 531.5 h4 l-2 2.5z" fill="#e0e0e0"/>
<!-- annotation scale icons -->
<path d="M799.5 540.5 l5-6.5 l5 6.5 M804.5 534 v-4.5 M804.5 533 l3.5-2.5" stroke="#3a90f0" stroke-width="2" fill="none"/><circle cx="808.5" cy="529.5" r="2.2" fill="none" stroke="#3a90f0" stroke-width="1.1"/>
<path d="M817 540.5 l5-6.5 l5 6.5 M822 534 v-5.5 M822 532 l3.5-2.5 M824.5 528 l2 1" stroke="#a0a0a0" stroke-width="2" fill="none"/>
<path d="M834 540.5 l5-6.5 l5 6.5 M839 534 v-6" stroke="#a0a0a0" stroke-width="2" fill="none"/>
<text x="852.6" y="537.5" font-size="10" fill="#d8d8d8" textLength="10.8" lengthAdjust="spacingAndGlyphs">1:1</text>
<path d="M866 531.5 h4 l-2 2.5z" fill="#e0e0e0"/>
<circle cx="884.5" cy="533.5" r="3.5" fill="#9a9a9a" stroke="#9a9a9a" stroke-width="2" stroke-dasharray="1.5 1"/><circle cx="884.5" cy="533.5" r="1.4" fill="#3e3e3e"/>
<path d="M898 531.5 h4 l-2 2.5z" fill="#e0e0e0"/>
<path d="M915.3 528 v11 M909.8 533.5 h11" stroke="#d0d0d0" stroke-width="1.3"/>
<rect x="929.5" y="527.5" width="5.5" height="5" fill="none" stroke="#a0a0a0" stroke-width="0.9"/><circle cx="938.5" cy="532" r="3" fill="none" stroke="#a0a0a0" stroke-width="0.9"/><path d="M930 540 l3-5 l3 5z" fill="none" stroke="#a0a0a0" stroke-width="0.9"/>
<circle cx="955.8" cy="533.5" r="6.3" fill="#1860c0" stroke="#3a90f0" stroke-width="1.2"/><path d="M953.5 536 l5-5" stroke="#7ab8ff" stroke-width="0.9"/>
<rect x="969" y="530" width="11" height="8" fill="#e8c030"/><path d="M972 536 l2.5 2.5 l5-5" stroke="#30b030" stroke-width="1.5" fill="none"/><circle cx="972" cy="528.5" r="2" fill="#4a90e0"/>
<rect x="988.5" y="528.5" width="12" height="9" fill="none" stroke="#c0c0c0" stroke-width="0.9"/><path d="M990.5 536 l3.5-3.5 M995.5 531.5 l3-2.5" stroke="#c0c0c0" stroke-width="0.9"/>
<path d="M1007.5 529 h10.5 M1007.5 533.5 h10.5 M1007.5 538 h10.5" stroke="#d8d8d8" stroke-width="1.4"/>

<!-- ===== TASKBAR ===== -->
<rect x="0" y="544.7" width="1023" height="30.3" fill="url(#gTask)"/>
<rect x="0" y="544.7" width="36" height="30.3" fill="#1a2029"/>
<g fill="#ffffff"><path d="M11.7 556.3 l5.3-0.8 v4.9 h-5.3z M17.8 555.4 l6.2-0.9 v5.9 h-6.2z M11.7 561.2 h5.3 v4.9 l-5.3-0.8z M17.8 561.2 h6.2 v5.9 l-6.2-0.9z"/></g>
<rect x="36" y="545.3" width="257.3" height="29.7" fill="#3b3b3b" stroke="#5a5a5a" stroke-width="0.8"/>
<circle cx="52.5" cy="559" r="3.8" fill="none" stroke="#d8d8d8" stroke-width="1.1"/><path d="M49.8 561.7 l-4.2 4.2" stroke="#d8d8d8" stroke-width="1.3"/>
<text x="66" y="564.5" font-size="11.5" fill="#dadada" textLength="120.2" lengthAdjust="spacingAndGlyphs">Escribe aquí para buscar</text>
<circle cx="311.3" cy="560" r="5.2" fill="none" stroke="#f0f0f0" stroke-width="1.6"/>
<g fill="none" stroke="#e8e8e8" stroke-width="1.1"><rect x="342.5" y="556.5" width="6" height="7"/><path d="M351 555.5 v9 M340 555 h3 M340 565 h3"/></g>
<!-- explorer -->
<path d="M378.5 555 h6 l1.5 2 h7.5 v10 h-15z" fill="#e8b830"/><rect x="378.5" y="559" width="15" height="8" fill="#f8d060"/><rect x="383" y="562" width="6" height="3" fill="#3a7bd5"/>
<!-- edge -->
<path d="M428 561.5 h-10 c0.5 3 3 4.5 5.5 4.5 c1.8 0 3.3 -0.5 4.5 -1.3 v3 c-1.4 0.8 -3 1.1 -4.8 1.1 c-4.5 0 -8 -3.5 -8 -8 c0 -4.5 3.5 -8 8 -8 c4 0 6.8 3 6.8 7z M418 559 h6.5 c-0.3 -2 -1.5 -3 -3.2 -3 c-1.8 0 -3 1.2 -3.3 3z" fill="#1a78d8" fill-rule="evenodd"/>
<!-- chrome -->
<circle cx="459" cy="560.3" r="7.8" fill="#dc4437"/><path d="M459 560.3 L451.2 560.3 A7.8 7.8 0 0 0 462.9 567z" fill="#1da462"/><path d="M459 560.3 L462.9 567 A7.8 7.8 0 0 0 466.8 560.3 z" fill="#ffcd46"/><path d="M459 560.3 L466.8 560.3 A7.8 7.8 0 0 0 459 552.5z" fill="#ffcd46"/><circle cx="459" cy="560.3" r="3.5" fill="#fff"/><circle cx="459" cy="560.3" r="2.7" fill="#4285f4"/>
<!-- store -->
<path d="M487 556 h15 v11 h-15z" fill="#f4f4f4"/><path d="M491 556 a3.5 3.5 0 0 1 7 0" stroke="#f4f4f4" stroke-width="1.2" fill="none"/>
<rect x="491.3" y="558.3" width="3" height="3" fill="#f25022"/><rect x="494.8" y="558.3" width="3" height="3" fill="#7fba00"/><rect x="491.3" y="561.8" width="3" height="3" fill="#00a4ef"/><rect x="494.8" y="561.8" width="3" height="3" fill="#ffb900"/>
<!-- mail -->
<path d="M524 557 h16 v10 h-16z" fill="#3a90e0"/><path d="M524 557 l8 6 l8-6" stroke="#c8e0f8" stroke-width="1" fill="none"/><path d="M526 556 l6-3 l6 3" fill="#2a6ab0"/>
<circle cx="541.6" cy="564.6" r="5.6" fill="#2e3034" stroke="#9a9a9a" stroke-width="0.7"/><text x="541.6" y="568" font-size="9" font-weight="bold" fill="#e8e8e8" text-anchor="middle">5</text>
<!-- dropbox -->
<g fill="#f4f4f4"><path d="M565 554 l4 2.5 l-4 2.5 l-4-2.5z"/><path d="M573.5 554 l4 2.5 l-4 2.5 l-4-2.5z"/><path d="M565 559.5 l4 2.5 l-4 2.5 l-4-2.5z"/><path d="M573.5 559.5 l4 2.5 l-4 2.5 l-4-2.5z"/><path d="M569.3 565 l3.5 2.2 l-3.5 2.2 l-3.5-2.2z"/></g>
<!-- S -->
<path d="M610 551.5 L603.5 557.5 Q602.5 559 604.5 559.8 L607 560.8 L602 569 L609 562 Q610.5 560.5 608.5 559.5 L606 558.5 Z" fill="#f4f4f4"/>
<!-- autocad active -->
<rect x="626" y="544.7" width="32.5" height="30.3" fill="#5c4652"/>
<rect x="633.2" y="551.2" width="18.4" height="17.6" fill="#f0e6e2"/>
<path d="M635.5 566.5 L640 553.5 H644.5 L648.5 566.5 H645.3 L644.5 563.5 H640 L639 566.5z M640.8 561 H643.8 L642.5 556.3z" fill="#c81c1c" fill-rule="evenodd"/>
<rect x="370" y="573" width="32" height="2" fill="#80b8f0"/>
<rect x="443" y="573" width="33" height="2" fill="#80b8f0"/>
<rect x="626" y="573" width="32.5" height="2" fill="#80b8f0"/>
<!-- tray -->
<circle cx="811.3" cy="560" r="8" fill="#f0f4f8"/><circle cx="811.3" cy="560" r="6.7" fill="#1a88e0"/><text x="810.6" y="564.3" font-size="11.5" font-weight="bold" fill="#fff" text-anchor="middle">?</text><circle cx="817.6" cy="563.8" r="3" fill="#1a88e0" stroke="#e8f0f8" stroke-width="0.7"/><rect x="817.1" y="562.5" width="1" height="3" fill="#fff"/>
<path d="M828.5 563 l4-4 l4 4" stroke="#e8e8e8" stroke-width="1.2" fill="none"/>
<path d="M845 565 l5-7 l3 4" stroke="#30a0e0" stroke-width="1.8" fill="none"/><circle cx="852.5" cy="557.5" r="2.8" fill="#f0a040"/><path d="M846 562 l5 3" stroke="#e0d030" stroke-width="1.4"/>
<path d="M862.5 558.5 h2 l3-3 v10 l-3-3 h-2z" fill="#e8e8e8"/><path d="M869.5 557 a4 4 0 0 1 0 7 M871.5 555 a6.5 6.5 0 0 1 0 11" stroke="#e8e8e8" stroke-width="0.9" fill="none"/>
<circle cx="884" cy="560" r="3.5" fill="#a0a0a0"/><circle cx="887.5" cy="561" r="3.5" fill="#b8b8b8"/><circle cx="889" cy="564" r="3.3" fill="#e02828"/><path d="M887.5 562.5 l3 3 M890.5 562.5 l-3 3" stroke="#fff" stroke-width="0.8"/>
<path d="M900 566 a9 9 0 0 1 9 -9 M902.5 566 a6.5 6.5 0 0 1 6.5 -6.5 M905 566 a4 4 0 0 1 4-4" stroke="#d0d0d0" stroke-width="0.9" fill="none"/><circle cx="908" cy="565" r="1" fill="#e0e0e0"/>
<rect x="917" y="558" width="11" height="6" fill="none" stroke="#e0e0e0" stroke-width="1"/><rect x="919" y="559.5" width="7" height="3" fill="#e0e0e0"/><path d="M916 556 v4" stroke="#e0e0e0" stroke-width="1.2"/>
<text x="935.6" y="556.8" font-size="8.5" fill="#e8e8e8" textLength="42.7" lengthAdjust="spacingAndGlyphs">12:46 p. m.</text>
<text x="935.6" y="569" font-size="8.5" fill="#e8e8e8" textLength="42.9" lengthAdjust="spacingAndGlyphs">21/05/2020</text>
<path d="M993 554 h13 v8 h-5 l-3 3 v-3 h-5z" fill="#e8e8e8"/><path d="M995 556.5 h9 M995 558.5 h9" stroke="#333" stroke-width="0.7"/>
<circle cx="1002.5" cy="566" r="5.5" fill="#1b2129" stroke="#e0e0e0" stroke-width="0.8"/><text x="1002.5" y="569" font-size="7.5" fill="#f0f0f0" text-anchor="middle">17</text>
</svg></body></html>
